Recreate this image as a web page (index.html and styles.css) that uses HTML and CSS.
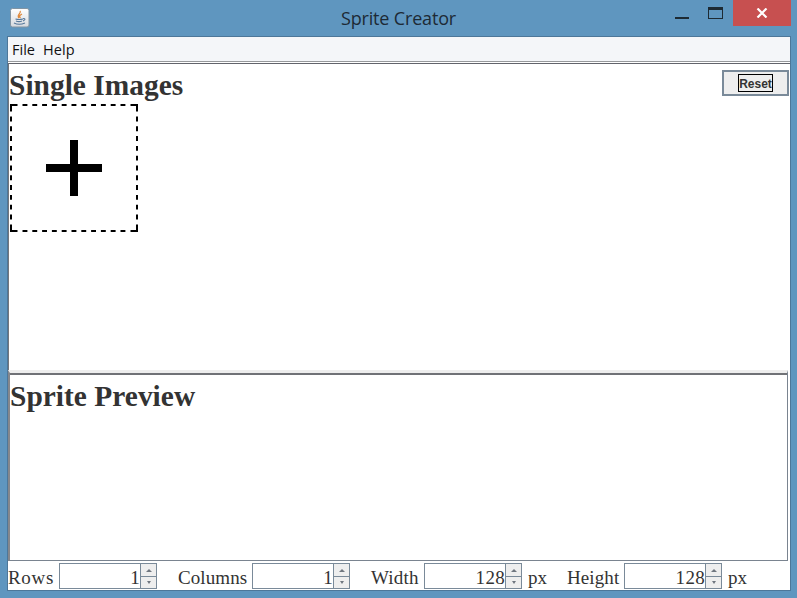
FILE: index.html
```html
<!DOCTYPE html>
<html lang="en">
<head>
<meta charset="utf-8">
<title>Sprite Creator</title>
<link rel="stylesheet" href="styles.css">
</head>
<body>
<div class="window">
  <header class="titlebar">
    <svg class="app-icon" width="20" height="20" viewBox="0 0 20 20">
      <defs><linearGradient id="tile" x2="0" y2="1"><stop stop-color="#fff"/><stop offset="1" stop-color="#d5d9de"/></linearGradient></defs>
      <rect x=".5" y=".5" width="18.5" height="18.5" rx="2" fill="url(#tile)" stroke="#8194a3"/>
      <path d="M10 3C12 5 6 6.500 9 10M12 6C9 7.500 9 8.500 10.500 10" fill="none" stroke="#e08a3c" stroke-width="1.300"/>
      <path d="M5.500 11Q9 12 13 11M6 13Q9 14.300 12 13M13 10.500Q17 10.500 13 13M4 15Q9 17.500 15 15" fill="none" stroke="#58799b" stroke-width="1.100"/>
    </svg>
    <h1 class="title">Sprite Creator</h1>
    <div class="controls">
      <span class="control minimize"><i></i></span>
      <span class="control maximize"><i></i></span>
      <span class="control close"><svg width="12" height="10" viewBox="0 0 12 10"><path d="M1.500 .5L10.500 9.500M10.500 .5L1.500 9.500" stroke="#fff" stroke-width="2.200"/></svg></span>
    </div>
  </header>
  <main class="client">
    <nav class="menu"><span class="file">File</span><span class="help">Help</span></nav>
    <section class="images">
      <div class="images-head"><h2>Single Images</h2><button class="reset"><span>Reset</span></button></div>
      <svg class="add" width="128" height="128" viewBox="0 0 128 128">
        <g fill="none" stroke="#000" stroke-width="2">
          <path d="M12.500 1H116M12.500 127H116M1 12.500V116M127 12.500V116" stroke-dasharray="4.900 4.900"/>
          <path d="M7.500 1H1V7.500M120.500 1H127V7.500M1 120.500V127H7.500M120.500 127H127V120.500"/>
        </g>
        <path d="M60 36h8v24h24v8h-24v24h-8v-24h-24v-8h24z"/>
      </svg>
    </section>
    <section class="preview"><h2>Sprite Preview</h2></section>
    <footer class="settings">
      <label class="rows">Rows</label><div class="spinner"><span class="value">1</span><span class="arrows"><i class="up"></i><i class="down"></i></span></div>
      <label class="columns">Columns</label><div class="spinner"><span class="value">1</span><span class="arrows"><i class="up"></i><i class="down"></i></span></div>
      <label class="width">Width</label><div class="spinner"><span class="value">128</span><span class="arrows"><i class="up"></i><i class="down"></i></span></div><span class="unit">px</span>
      <label class="height">Height</label><div class="spinner"><span class="value">128</span><span class="arrows"><i class="up"></i><i class="down"></i></span></div><span class="unit">px</span>
    </footer>
  </main>
</div>
</body>
</html>
```
FILE: styles.css
```css
* { box-sizing: border-box; }
body { margin: 0; overflow: hidden; }
.window { width: 797px; height: 598px; background: #5f96bf; padding: 0 6px 7px 7px; display: flex; flex-direction: column; }
.titlebar { height: 36px; flex: none; display: grid; grid-template-columns: 334px 1fr 126px; }
.app-icon { margin: 8px 0 0 3px; }
.title { margin: 5px 0 0; font: 18px/27px "Open Sans", sans-serif; letter-spacing: -.17px; color: #1d2a35; white-space: nowrap; }
.controls { display: flex; height: 26px; margin-left: 2px; }
.control { display: flex; width: 33px; flex: none; }
.minimize i { width: 14px; height: 2px; margin: 17px 0 0 8px; background: #1d2a33; }
.maximize i { width: 15px; height: 12px; margin: 7px 0 0 8px; border: 1px solid #1d2a33; border-top-width: 3px; }
.close { width: 58px; background: #c75050; align-items: center; justify-content: center; padding-right: 1px; }
.client { flex: 1; min-height: 0; border: 1px solid #4d7799; background: #fff; display: flex; flex-direction: column; }
.menu { height: 25px; flex: none; background: #f4f6f9; border-bottom: 1px solid #97999c; font: 14.5px/26px "Open Sans", sans-serif; color: #111; display: flex; padding-left: 4px; }
.file { width: 31px; }
.help { letter-spacing: .1px; }
.images { height: 307px; flex: none; margin-top: 1px; border-top: 1px solid #62646c; border-left: 1px solid #73777d; }
.images-head { display: flex; justify-content: space-between; height: 40px; }
h2 { margin: 0; font: bold 29.4px/34px "Liberation Serif", serif; letter-spacing: .03px; color: #333; white-space: nowrap; }
.images h2 { padding-top: 4px; }
.reset { width: 67px; height: 26px; margin: 6px 1px 0 0; padding: 0; border: 2px solid #7a8a99; background: #eee; display: flex; align-items: center; justify-content: center; }
.reset span { border: 1px solid #000; width: 35px; height: 18px; font: bold 12px/18px "Liberation Sans", sans-serif; color: #333; display: flex; justify-content: center; }
.add { display: block; margin-left: 1px; }
.preview { height: 191px; flex: none; margin-right: 2px; border-top: 3px solid #eee; border-bottom: 1px solid #7a8490; border-left: 2px solid #85878c; border-right: 1px solid #7a8490; box-shadow: inset 0 2px #707277; }
.preview h2 { padding-top: 6px; }
.settings { flex: 1; min-height: 0; display: flex; padding-top: 2px; font: 19px/27px "Liberation Serif", serif; color: #333; }
.settings label { flex: none; margin-top: 1px; }
.rows { width: 51px; letter-spacing: .7px; }
.columns { width: 74px; margin-left: 21px; letter-spacing: .1px; }
.width { width: 53px; margin-left: 21px; letter-spacing: .2px; }
.settings .height { width: 57px; margin-left: 19px; letter-spacing: .1px; }
.spinner { width: 98px; height: 26px; flex: none; border: 1px solid #7a8a99; display: flex; }
.value { flex: 1; text-align: right; letter-spacing: .3px; }
.arrows { width: 16px; margin-left: -1px; border-left: 1px solid #7a8a99; display: grid; grid-template-rows: 13px 11px; background: #eee; flex: none; }
.spinner .arrows { margin-left: 0; }
.arrows i { display: flex; align-items: center; justify-content: center; }
.up { border-bottom: 1px solid #7a8a99; }
.arrows i::after { content: ""; width: 0; border: 0 solid transparent; }
.arrows .up::after { border-width: 0 3px 3px; border-bottom-color: #707780; }
.arrows .down::after { border-width: 3px 2px 0; border-top-color: #707780; }
.unit { width: 20px; margin: 1px 0 0 6px; }
```
